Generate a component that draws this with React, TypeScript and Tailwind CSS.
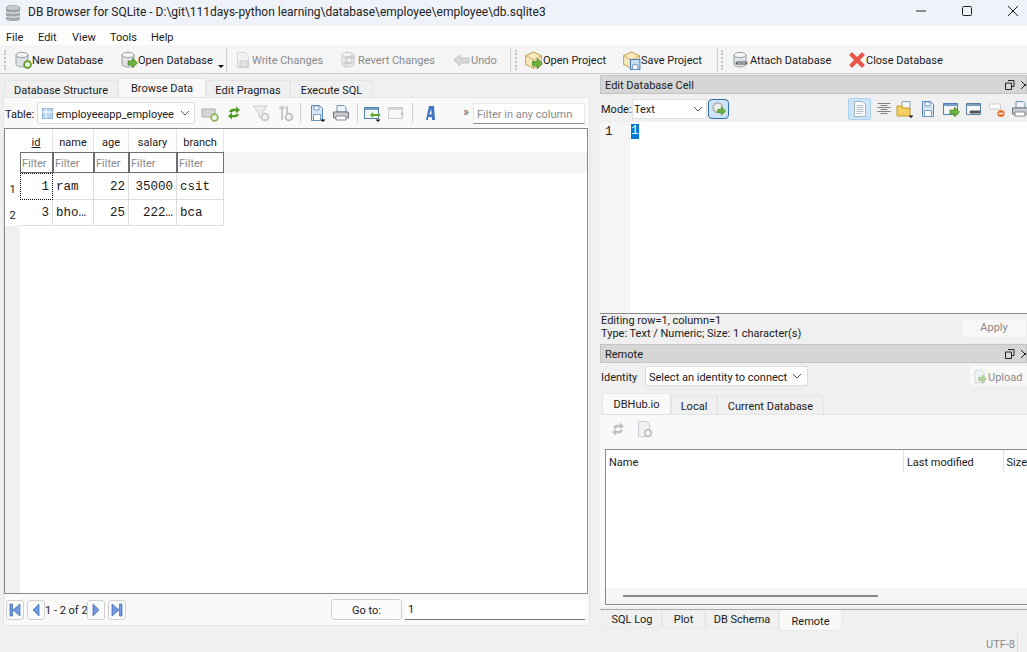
import type { ReactNode } from "react";

// --- Small drawn icons (all 18x18 unless noted) ---
function Svg({ children, size = 18, className = "" }: { children: ReactNode; size?: number; className?: string }) {
  return (
    <svg width={size} height={size} viewBox="0 0 18 18" className={`shrink-0 ${className}`}>
      {children}
    </svg>
  );
}

function Cyl() {
  return (
    <>
      <path d="M2 4v9c0 1.600 2.700 3 6 3s6-1.400 6-3V4z" fill="#dfe2e5" stroke="#9a9fa3" />
      <ellipse cx="8" cy="4" rx="6" ry="2.600" fill="#f2f4f5" stroke="#9a9fa3" />
    </>
  );
}

const PlusBadge = () => <circle cx="13.500" cy="13.500" r="3.400" fill="#eef7e0" stroke="#5c9a1f" strokeWidth="1.800" />;
const GreyBadge = () => <circle cx="13" cy="13" r="3.400" fill="#eee" stroke="#9a9a9a" strokeWidth="1.800" />;
const GreenArrow = () => <path d="M8 10h4.500V7l5 5-5 5v-3H8z" fill="#6cb33f" stroke="#3f7f1c" strokeWidth=".7" />;
const RedMinus = () => (
  <>
    <circle cx="13" cy="13.500" r="3.600" fill="#e8732c" />
    <path d="M10.800 13.500h4.400" stroke="#fff" strokeWidth="1.400" />
  </>
);
const Caret = () => <path d="M12.500 15.500h5l-2.500 2.500z" fill="#111" />;

function Doc({ grey = false }: { grey?: boolean }) {
  return <path d="M3.500 1.500h8l3 3v12h-11z" fill={grey ? "#eceff1" : "#f7f9fb"} stroke={grey ? "#a5aab0" : "#9fb0c0"} />;
}

function Floppy() {
  return (
    <>
      <path d="M3.500 1.500h8l3 3v12h-11z" fill="#d8e6f5" stroke="#5a88ba" />
      <path d="M6 2h5v4H6zM5.500 10.500h7v6h-7z" fill="#fff" stroke="#5a88ba" strokeWidth=".8" />
    </>
  );
}

function Win({ line = "#4e7fb5" }: { line?: string }) {
  return (
    <>
      <path d="M1.500 3.500h14v11h-14z" fill="#f4f8fc" stroke={line} />
      <path d="M1.500 3.500h14v2.500h-14z" fill={line} opacity=".75" />
    </>
  );
}

function Box() {
  return (
    <>
      <path d="M9 1 1.500 4.500v8L9 16.500l7.500-4v-8z" fill="#f8e8bd" stroke="#c9a55c" />
      <path d="M1.500 4.500 9 8.500l7.500-4M9 8.500v8" fill="none" stroke="#c9a55c" strokeWidth=".8" />
    </>
  );
}

function Refresh({ grey = false }: { grey?: boolean }) {
  const c = grey ? "#a8a8a8" : "#4f9a24";
  return (
    <>
      <path d="M4 8a5 4 0 0 1 7-3V2.500l4 3.600-4 3.400V7.300A4 3 0 0 0 6.500 8.500z" fill={c} />
      <path d="M14 10a5 4 0 0 1-7 3v2.500l-4-3.600 4-3.400v2.200a4 3 0 0 0 4.500-.7z" fill={c} />
    </>
  );
}

function Printer() {
  return (
    <>
      <path d="M5 8V1.500h7l2 2V8z" fill="#eef4fa" stroke="#6d8fb5" />
      <path d="M1.500 8h15v6h-15z" fill="#c9ccd0" stroke="#6e7277" />
      <path d="M4 12h10v4H4z" fill="#fff" stroke="#6e7277" strokeWidth=".8" />
    </>
  );
}

function Lines() {
  return <path d="M5.500 5.500h7M5.500 7.500h7M5.500 9.500h7M5.500 11.500h7M5.500 13.500h5" stroke="#b0b4b8" strokeWidth=".9" />;
}

// --- Shared pieces ---
function Grip() {
  return <div className="w-0 h-[20px] border-l-2 border-dotted border-[#c4c4c4] shrink-0" />;
}

function Sep({ className = "" }: { className?: string }) {
  return <div className={`w-px h-[24px] bg-[#cfcfcf] shrink-0 ${className}`} />;
}

function ToolBtn({ icon, label, className = "", off = false }: { icon: ReactNode; label: string; className?: string; off?: boolean }) {
  return (
    <div className={`flex items-center shrink-0 ${off ? "text-[#8a8a8a]" : "text-[#1a1a1a]"} ${className}`}>
      {icon}
      <span className="mt-[1px]">{label}</span>
    </div>
  );
}

function Chevron({ className = "" }: { className?: string }) {
  return (
    <svg width="10" height="6" viewBox="0 0 10 6" className={`shrink-0 ${className}`}>
      <path d="M1 1l4 4 4-4" fill="none" stroke="#555" strokeWidth="1" />
    </svg>
  );
}

function DockTitle({ title }: { title: string }) {
  return (
    <div className="h-[19px] shrink-0 bg-[#d6d6d6] border border-[#c4c4c4] flex items-center pl-[4px] pr-0 overflow-hidden text-[#1a1a1a]">
      <span className="flex-1 pt-[2px]">{title}</span>
      <svg width="10" height="10" viewBox="0 0 10 10" className="shrink-0 mr-[5px]">
        <path d="M3 .5h6v6H7M.5 3h6v6.500h-6z" fill="none" stroke="#222" />
      </svg>
      <svg width="6" height="10" viewBox="0 0 6 10" className="shrink-0">
        <path d="M1 1l8 8M1 9l8-8" stroke="#222" />
      </svg>
    </div>
  );
}

function NavBtn({ children }: { children: ReactNode }) {
  return (
    <div className="w-[18px] h-[20px] bg-[#fbfbfb] border border-[#d0d0d0] rounded-[3px] flex items-center justify-center shrink-0">
      <svg width="12" height="14" viewBox="0 0 12 14">
        {children}
      </svg>
    </div>
  );
}

const leftTabs = [
  { label: "Database Structure", w: "w-[114px]" },
  { label: "Browse Data", w: "w-[88px]", active: true },
  { label: "Edit Pragmas", w: "w-[84px]" },
  { label: "Execute SQL", w: "w-[83px]" },
];

const cols = [
  { name: "id", w: "w-[33px]", underline: true },
  { name: "name", w: "w-[41px]" },
  { name: "age", w: "w-[35px]" },
  { name: "salary", w: "w-[48px]" },
  { name: "branch", w: "w-[47px]" },
];

const rows = [
  ["1", "ram", "22", "35000", "csit"],
  ["3", "bho…", "25", "222…", "bca"],
];

const dockTabs = [
  { label: "SQL Log", w: "w-[60px]" },
  { label: "Plot", w: "w-[43px]" },
  { label: "DB Schema", w: "w-[74px]" },
  { label: "Remote", w: "w-[63px]", active: true },
];

const remoteTabs = [
  { label: "DBHub.io", w: "w-[69px]", active: true },
  { label: "Local", w: "w-[46px]" },
  { label: "Current Database", w: "w-[107px]" },
];

export default function App() {
  return (
    <div className="w-[1027px] h-[652px] overflow-hidden bg-[#f0f0f0] flex flex-col text-[11px] leading-none text-[#1a1a1a] [font-family:Roboto,sans-serif]">
      {/* Title bar */}
      <div className="h-[26px] shrink-0 bg-[#eff3f9] flex items-center pl-[4px] text-[12px]">
        <svg width="18" height="18" viewBox="0 0 18 18" className="shrink-0">
          <path d="M2 4v11c0 1.200 3 2 7 2s7-.8 7-2V4z" fill="#a3a7ab" />
          <path d="M2 8c1 1.400 13 1.400 14 0M2 12c1 1.400 13 1.400 14 0" fill="none" stroke="#eef0f2" />
          <ellipse cx="9" cy="4" rx="7" ry="2.600" fill="#c7cacc" stroke="#85898d" strokeWidth=".6" />
        </svg>
        <span className="ml-[6px] flex-1 whitespace-nowrap text-[#222] -mt-[2px]">
          DB Browser for SQLite - D:\git\111days-python learning\database\employee\employee\db.sqlite3
        </span>
        <svg width="12" height="12" viewBox="0 0 12 12" className="mr-[34px] -mt-[4px]">
          <path d="M1 6h10" stroke="#222" />
        </svg>
        <svg width="12" height="12" viewBox="0 0 12 12" className="mr-[34px] -mt-[4px]">
          <rect x="1.500" y="1.500" width="9" height="9" rx="1" fill="none" stroke="#222" />
        </svg>
        <svg width="12" height="12" viewBox="0 0 12 12" className="mr-[8px] -mt-[4px]">
          <path d="M1 1l10 10M1 11l10-10" stroke="#222" />
        </svg>
      </div>

      {/* Menu bar */}
      <div className="h-[19px] shrink-0 bg-white flex items-center pt-[4px]">
        <span className="ml-[6px] w-[32px]">File</span>
        <span className="w-[34px]">Edit</span>
        <span className="w-[38px]">View</span>
        <span className="w-[41px]">Tools</span>
        <span>Help</span>
      </div>

      {/* Main toolbar */}
      <div className="h-[29px] shrink-0 bg-[#f5f5f5] border-b border-[#cdcdcd] flex items-center pl-[4px] pt-[2px] whitespace-nowrap">
        <Grip />
        <ToolBtn className="ml-[8px] w-[106px]" label="New Database" icon={<Svg><Cyl /><PlusBadge /></Svg>} />
        <ToolBtn className="w-[98px]" label="Open Database" icon={<Svg><Cyl /><GreenArrow /></Svg>} />
        <svg width="6" height="3" viewBox="0 0 6 3" className="mt-[12px] shrink-0"><path d="M0 0h6L3 3z" fill="#111" /></svg>
        <Sep className="ml-[2px] mr-[7px]" />
        <ToolBtn off className="w-[106px]" label="Write Changes" icon={<Svg className="opacity-40"><Doc grey /><path d="M6 10h8v6H6z" fill="#ccc" stroke="#888" /></Svg>} />
        <ToolBtn off className="w-[113px]" label="Revert Changes" icon={<Svg className="opacity-50"><Cyl /><Refresh grey /></Svg>} />
        <ToolBtn off className="w-[57px]" label="Undo" icon={<Svg className="opacity-60"><path d="M1 9l6-5v3h9v5H7v3z" fill="#c4c4c4" stroke="#a0a0a0" /></Svg>} />
        <Sep />
        <div className="ml-[4px]"><Grip /></div>
        <ToolBtn className="ml-[7px] w-[98px]" label="Open Project" icon={<Svg size={19}><Box /><GreenArrow /></Svg>} />
        <ToolBtn className="w-[95px]" label="Save Project" icon={<Svg size={19}><Box /><path d="M8 8h9v9.500H8z" fill="#c9dcf2" stroke="#4e7fb5" /><path d="M10 13h5v4.500h-5z" fill="#fff" stroke="#4e7fb5" strokeWidth=".7" /></Svg>} />
        <Sep />
        <div className="ml-[3px]"><Grip /></div>
        <ToolBtn
          className="ml-[9px] w-[116px]"
          label="Attach Database"
          icon={<Svg><Cyl /><path d="M5 12h4M9 12h5" stroke="#555" strokeWidth="3" strokeLinecap="round" /><path d="M5 12h9" stroke="#ddd" strokeWidth="1" /></Svg>}
        />
        <ToolBtn
          label="Close Database"
          icon={<Svg><path d="M1.500 4 4 1.500l5 5 5-5L16.500 4l-5 5 5 5-2.500 2.500-5-5-5 5L1.500 14l5-5z" fill="#ee5249" stroke="#d43a31" strokeWidth=".6" /></Svg>}
        />
      </div>

      {/* Body */}
      <div className="flex-1 min-h-0 flex">
        {/* Left: browse pane */}
        <div className="w-[600px] shrink-0 pl-[3px] pr-[10px] pt-[5px] flex flex-col">
          <div className="h-[18px] shrink-0 flex items-end pl-px">
            {leftTabs.map((t) => (
              <div
                key={t.label}
                className={`${t.w} flex items-center justify-center border-t border-x ${
                  t.active
                    ? "h-[19px] pt-[1px] bg-[#f9f9f9] border-[#e4e4e4]"
                    : "h-[17px] pt-[2px] bg-[#f0f0f0] border-[#e6e6e6]"
                }`}
              >
                {t.label}
              </div>
            ))}
          </div>
          <div className="h-[529px] shrink-0 bg-[#f9f9f9] border border-[#e4e4e4] flex flex-col">
            {/* Table row */}
            <div className="h-[30px] shrink-0 flex items-center pl-[1px] whitespace-nowrap">
              <span className="w-[32px] shrink-0 mt-[2px]">Table:</span>
              <div className="w-[158px] h-[22px] shrink-0 bg-white border border-[#dcdcdc] rounded-[2px] flex items-center pl-[4px] pr-[4px]">
                <svg width="11" height="11" viewBox="0 0 11 11" className="shrink-0 mr-[3px]">
                  <rect x=".5" y=".5" width="10" height="10" fill="#b9d4f0" stroke="#8fb3d9" />
                  <path d="M.5 4h10M4 .5v10" stroke="#fff" />
                </svg>
                <span className="flex-1 pt-[2px]">employeeapp_employee</span>
                <Chevron />
              </div>
              <div className="ml-[6px] flex items-center shrink-0">
                <Svg className="opacity-70"><path d="M1 5h13v8H1z" fill="#c9c9c9" stroke="#8c8c8c" /><PlusBadge /></Svg>
                <Svg className="ml-[6px]"><Refresh /></Svg>
                <Svg className="ml-[9px] opacity-50"><path d="M1 2h14L10 9v5l-3-1V9z" fill="#e4e4e4" stroke="#a0a0a0" /><GreyBadge /></Svg>
                <Svg className="ml-[6px] opacity-60"><path d="M5 16V5H2.500L6 1l3.500 4H7v11zM10 2h2v8h-2z" fill="#aaa" /><GreyBadge /></Svg>
                <Sep className="ml-[6px] !h-[20px]" />
                <Svg className="ml-[7px]"><Floppy /><Caret /></Svg>
                <Svg className="ml-[6px]"><Printer /></Svg>
                <Sep className="ml-[7px] !h-[20px]" />
                <Svg className="ml-[5px]"><Win /><path d="M7 11l3-3v2h7v2h-7v2z" fill="#5fa82e" /><Caret /></Svg>
                <Svg className="ml-[6px] opacity-40"><Win line="#888" /><path d="M14 7l3 3-3 3z" fill="#888" /></Svg>
                <Sep className="ml-[7px] !h-[20px]" />
                <Svg className="ml-[7px]"><path d="M6 16 9 2h5l1 14h-3l-.2-3H8.500l-.8 3zM9.200 10.500h2.400L11.300 5z" fill="#3f74c4" /></Svg>
              </div>
              <span className="ml-[25px] w-[10px] shrink-0 text-[13px] leading-none text-[#555] -mt-[3px]">»</span>
              <div className="w-[112px] h-[21px] shrink-0 bg-white border border-[#e8e8e8] border-b-[#8a8a8a] flex items-center pl-[3px] pt-[2px] text-[#8a8a8a]">
                Filter in any column
              </div>
            </div>

            {/* Data grid */}
            <div className="mr-[1px] h-[466px] shrink-0 bg-white border border-[#8a8a8a] flex [font-family:'Liberation_Mono',monospace]">
              <div className="w-[15px] shrink-0 bg-[#f0f0f0] flex flex-col [font-family:Roboto,sans-serif]">
                <div className="bg-white">
                  <div className="h-[44px]" />
                  {rows.map((_, i) => (
                    <div key={i} className={`${i === 0 ? "h-[27px]" : "h-[26px]"} pt-[5px] flex items-center justify-center text-[#222]`}>
                      {i + 1}
                    </div>
                  ))}
                </div>
              </div>
              <div className="flex-1 flex flex-col min-w-0">
                <div className="h-[23px] flex shrink-0 [font-family:Roboto,sans-serif]">
                  {cols.map((c) => (
                    <div key={c.name} className={`${c.w} pt-[3px] border-r border-[#e4e4e4] flex items-center justify-center ${c.underline ? "underline" : ""}`}>
                      {c.name}
                    </div>
                  ))}
                </div>
                <div className="h-[21px] flex shrink-0 bg-[#f5f5f5] [font-family:Roboto,sans-serif]">
                  {cols.map((c) => (
                    <div key={c.name} className={`${c.w} bg-white border border-[#6e6e6e] flex items-center pl-[1px] pt-[2px] text-[#8a8a8a]`}>
                      Filter
                    </div>
                  ))}
                </div>
                {rows.map((r, ri) => (
                  <div key={ri} className={`${ri === 0 ? "h-[27px]" : "h-[26px]"} flex shrink-0 text-[12.5px]`}>
                    {r.map((v, ci) => {
                      const right = ci === 0 || ci === 2 || ci === 3;
                      const focused = ri === 0 && ci === 0;
                      return (
                        <div
                          key={ci}
                          className={`${cols[ci].w} flex items-center px-[3px] pt-[2px] whitespace-nowrap ${right ? "justify-end" : ""} ${
                            focused ? "border border-dotted border-black" : "border-r border-b border-[#dcdcdc]"
                          }`}
                        >
                          {v}
                        </div>
                      );
                    })}
                  </div>
                ))}
              </div>
            </div>

            {/* Record navigation */}
            <div className="flex-1 flex items-center pl-[2px] whitespace-nowrap">
              <NavBtn>
                <path d="M1 1h2.500v12H1zM11 1v12L4 7z" fill="#6f9ae0" stroke="#3c64ad" strokeWidth=".7" />
              </NavBtn>
              <div className="ml-[3px]">
                <NavBtn>
                  <path d="M9 1v12L3 7z" fill="#6f9ae0" stroke="#3c64ad" strokeWidth=".7" />
                </NavBtn>
              </div>
              <span className="w-[42px] shrink-0 text-center pt-[2px]">1 - 2 of 2</span>
              <NavBtn>
                <path d="M3 1v12l6-6z" fill="#6f9ae0" stroke="#3c64ad" strokeWidth=".7" />
              </NavBtn>
              <div className="ml-[3px]">
                <NavBtn>
                  <path d="M1 1v12l7-6zM8.500 1H11v12H8.500z" fill="#6f9ae0" stroke="#3c64ad" strokeWidth=".7" />
                </NavBtn>
              </div>
              <div className="ml-[205px] w-[71px] h-[21px] shrink-0 bg-[#fbfbfb] border border-[#d0d0d0] rounded-[3px] flex items-center justify-center pt-[1px]">
                Go to:
              </div>
              <div className="ml-[3px] w-[180px] h-[20px] shrink-0 bg-white border-b border-[#777] flex items-center pl-[3px] pt-[1px]">1</div>
            </div>
          </div>
        </div>

        {/* Right: docks */}
        <div className="flex-1 min-w-0 flex flex-col pt-[1px] overflow-hidden">
          <DockTitle title="Edit Database Cell" />
          <div className="h-[28px] shrink-0 flex items-center pl-[1px] pt-[1px] whitespace-nowrap">
            <span className="w-[31px] shrink-0 mt-[1px]">Mode:</span>
            <div className="w-[75px] h-[20px] shrink-0 bg-white border border-[#e0e0e0] flex items-center pl-[1px] pr-[3px]">
              <span className="flex-1 pt-[1px]">Text</span>
              <Chevron />
            </div>
            <div className="ml-[1px] w-[21px] h-[20px] shrink-0 bg-[#cfe3f5] border border-[#2f6ea8] rounded-[4px] flex items-center justify-center">
              <Svg size={15}><circle cx="8" cy="8" r="5.500" fill="#eee" stroke="#9a9a9a" strokeWidth="2" strokeDasharray="2 1" /><GreenArrow /></Svg>
            </div>
            <div className="ml-[119px] w-[23px] h-[22px] shrink-0 bg-[#cce4f7] border border-[#a9d2f2] rounded-[2px] flex items-center justify-center">
              <Svg><Doc /><Lines /></Svg>
            </div>
            <Svg className="ml-[4px]"><path d="M2.500 3.500h13M5.500 5.500h7M2.500 7.500h13M5.500 9.500h7M2.500 11.500h13M5.500 13.500h7" stroke="#666" strokeWidth=".8" /></Svg>
            <Svg className="ml-[3px]"><path d="M6 1.500h8v8H6z" fill="#f4f6f8" stroke="#8fa0b0" /><path d="M1 6h5l1 2h7v8H1z" fill="#f4cf5e" stroke="#c59b2c" /><Caret /></Svg>
            <Svg className="ml-[5px]"><Floppy /></Svg>
            <Svg className="ml-[5px]"><Win /><GreenArrow /></Svg>
            <Svg className="ml-[5px]"><Win line="#5d7fa3" /><path d="M6 12h3M10 12h4" stroke="#555" strokeWidth="3" strokeLinecap="round" /></Svg>
            <Svg className="ml-[5px]"><path d="M1.500 4h11v5h-11z" fill="#fff" stroke="#cfcfcf" /><RedMinus /></Svg>
            <Svg className="ml-[5px]"><Printer /></Svg>
          </div>

          <div className="h-[192px] shrink-0 bg-white border-b border-[#8a8a8a] flex [font-family:'Liberation_Mono',monospace] text-[12.5px]">
            <div className="w-[30px] shrink-0 bg-[#f5f5f5] pl-[5px] pt-[4px] h-full">1</div>
            <div className="pl-px pt-[2px]">
              <span className="inline-block h-[15px] leading-[15px] bg-[#0078d7] text-white">1</span>
            </div>
          </div>

          <div className="h-[27px] shrink-0 flex items-center pl-px">
            <div className="flex-1 flex flex-col gap-px leading-[12px]">
              <span>Editing row=1, column=1</span>
              <span>Type: Text / Numeric; Size: 1 character(s)</span>
            </div>
            <div className="w-[66px] h-[20px] shrink-0 bg-[#f8f8f8] rounded-[3px] border border-[#eeeeee] flex items-center justify-center text-[#8a8a8a]">
              Apply
            </div>
          </div>

          <div className="mt-[3px]">
            <DockTitle title="Remote" />
          </div>
          <div className="h-[26px] shrink-0 flex items-center pl-px whitespace-nowrap">
            <span className="w-[44px] shrink-0 mt-[2px]">Identity</span>
            <div className="w-[163px] h-[20px] shrink-0 bg-white border border-[#dcdcdc] flex items-center pl-[3px] pr-[5px]">
              <span className="flex-1 pt-[2px]">Select an identity to connect</span>
              <Chevron />
            </div>
            <div className="ml-[162px] w-[57px] h-[20px] shrink-0 bg-[#f8f8f8] rounded-[3px] flex items-center pl-[2px] text-[#8a8a8a]">
              <Svg size={15} className="opacity-50"><Doc grey /><GreenArrow /></Svg>
              <span className="ml-px pt-[2px]">Upload</span>
            </div>
          </div>

          <div className="pl-[2px] pt-[3px] h-[25px] shrink-0 flex items-end">
            {remoteTabs.map((t) => (
              <div
                key={t.label}
                className={`${t.w} flex items-center justify-center border-t border-x ${
                  t.active
                    ? "h-[21px] bg-[#f9f9f9] border-[#e4e4e4]"
                    : "h-[19px] pt-[2px] bg-[#f0f0f0] border-[#e6e6e6]"
                }`}
              >
                {t.label}
              </div>
            ))}
          </div>
          <div className="h-[193px] shrink-0 bg-[#f9f9f9] border-t border-[#e4e4e4] flex flex-col">
            <div className="h-[34px] shrink-0 flex items-center pl-[9px] pb-[6px]">
              <Svg className="opacity-70"><Refresh grey /></Svg>
              <Svg className="ml-[8px] opacity-60"><Doc grey /><GreyBadge /></Svg>
            </div>
            <div className="ml-[5px] h-[156px] shrink-0 bg-white border-t border-l border-b border-[#8a8a8a] flex flex-col">
              <div className="h-[22px] shrink-0 flex items-center">
                <span className="w-[299px] h-full pl-[3px] pt-[2px] flex items-center border-r border-[#e4e4e4]">Name</span>
                <span className="w-[100px] h-full pl-[3px] pt-[2px] flex items-center border-r border-[#e4e4e4]">Last modified</span>
                <span className="pl-[3px] pt-[2px]">Size</span>
              </div>
              <div className="flex-1" />
              <div className="h-[16px] shrink-0 bg-[#f5f5f5] flex items-center pl-[17px]">
                <div className="w-[255px] h-[2px] bg-[#8a8a8a]" />
              </div>
            </div>
          </div>

          <div className="mt-[2px] border-t border-[#a8a8a8] flex items-start pl-[2px] shrink-0">
            {dockTabs.map((t) => (
              <div
                key={t.label}
                className={`${t.w} flex items-center justify-center border-x border-b border-[#e8e8e8] ${
                  t.active ? "h-[21px] pt-[3px] bg-[#f9f9f9]" : "h-[18px] pt-[2px] bg-[#f0f0f0]"
                }`}
              >
                {t.label}
              </div>
            ))}
          </div>
          <div className="flex-1 flex items-stretch justify-end pt-[2px] pr-[9px]">
            <span className="text-[#8a8a8a] pr-[2px] self-end pb-[2px]">UTF-8</span>
            <div className="w-px bg-[#dcdcdc]" />
          </div>
        </div>
      </div>
    </div>
  );
}
